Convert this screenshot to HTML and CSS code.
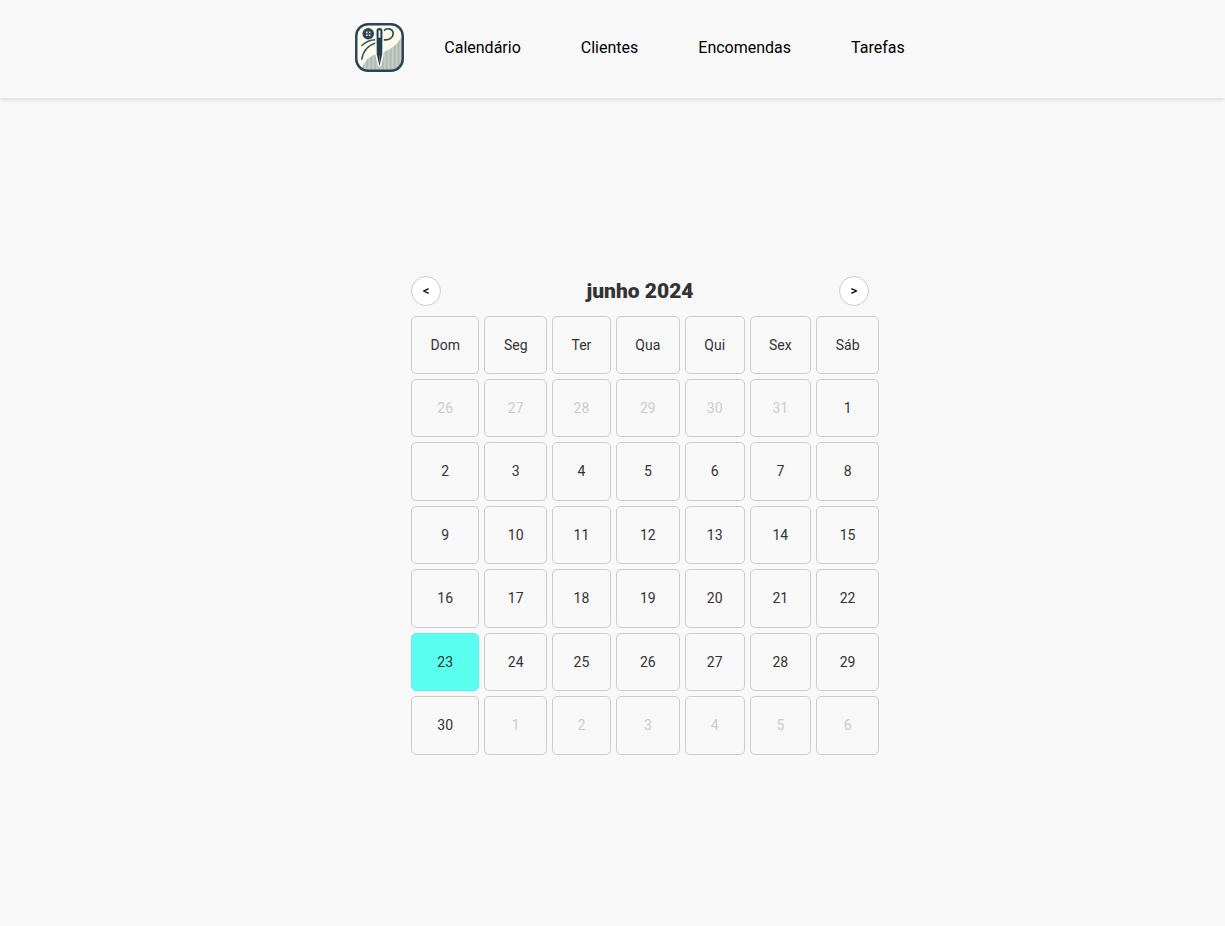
FILE: index.html
```html
<!DOCTYPE html>
<html lang="pt">
<head>
<meta charset="utf-8">
<meta name="viewport" content="width=device-width, initial-scale=1">
<title>Calendário</title>
<link rel="stylesheet" href="styles.css">
</head>
<body>
<header class="topbar">
  <a class="logo" href="#" aria-label="Início">
    <svg viewBox="0 0 50 50" width="49" height="49" aria-hidden="true">
      <defs>
        <clipPath id="frame"><rect x="2" y="2" width="46" height="46" rx="11"/></clipPath>
        <pattern id="weave" width="4" height="50" patternUnits="userSpaceOnUse">
          <rect width="4" height="50" fill="#bbc5bf"/>
          <rect width="1" height="50" fill="#a9b5b1"/>
          <rect x="2" width="1" height="50" fill="#c8cfc8"/>
        </pattern>
      </defs>
      <g clip-path="url(#frame)">
        <rect width="50" height="50" fill="#fbfaec"/>
        <path d="M7 49C8 39 15 33 24 31C36 28 43 23 49 12V50H7Z" fill="url(#weave)"/>
      </g>
      <path d="M7 37C8 28 13 23 22 20M7 23C11 19 16 17 21 17" fill="none" stroke="#35505b" stroke-width="1.5" stroke-linecap="round"/>
      <path d="M29 8C32 5 38 5 39 10C39 15 35 18 29 17" fill="none" stroke="#2f4b57" stroke-width="1.6"/>
      <circle cx="13.5" cy="11" r="5.9" fill="#2b4552"/>
      <g fill="#dbe2dc"><rect x="11.2" y="8.700" width="1.700" height="1.700"/><rect x="14.100" y="8.700" width="1.700" height="1.700"/><rect x="11.200" y="11.600" width="1.700" height="1.700"/><rect x="14.100" y="11.600" width="1.700" height="1.700"/></g>
      <path d="M22 8Q22 5 25 5Q28 5 28 8L27.800 32L25 44L22.200 32Z" fill="#243e4b" stroke="#fbfaec" stroke-width="3"/>
      <path d="M22 8Q22 5 25 5Q28 5 28 8L27.800 32L25 44L22.200 32Z" fill="#243e4b"/>
      <path d="M25 7.500V15" stroke="#e9eee7" stroke-width="2"/>
      <path d="M25 33V40" stroke="#788a8c" stroke-width=".6"/>
      <rect x="1.300" y="1.300" width="47.400" height="47.400" rx="12" fill="none" stroke="#2b4451" stroke-width="2.500"/>
    </svg>
  </a>
  <nav class="menu" aria-label="Principal">
    <a href="#">Calendário</a>
    <a href="#">Clientes</a>
    <a href="#">Encomendas</a>
    <a href="#">Tarefas</a>
  </nav>
</header>
<main class="page">
  <section class="calendar" aria-labelledby="month">
    <div class="calendar-head">
      <button type="button" aria-label="Mês anterior">&lt;</button>
      <h2 id="month">junho 2024</h2>
      <button type="button" aria-label="Mês seguinte">&gt;</button>
    </div>
    <table class="days">
      <thead>
        <tr><th>Dom</th><th>Seg</th><th>Ter</th><th>Qua</th><th>Qui</th><th>Sex</th><th>Sáb</th></tr>
      </thead>
      <tbody>
        <tr><td class="out">26</td><td class="out">27</td><td class="out">28</td><td class="out">29</td><td class="out">30</td><td class="out">31</td><td>1</td></tr>
        <tr><td>2</td><td>3</td><td>4</td><td>5</td><td>6</td><td>7</td><td>8</td></tr>
        <tr><td>9</td><td>10</td><td>11</td><td>12</td><td>13</td><td>14</td><td>15</td></tr>
        <tr><td>16</td><td>17</td><td>18</td><td>19</td><td>20</td><td>21</td><td>22</td></tr>
        <tr><td class="today">23</td><td>24</td><td>25</td><td>26</td><td>27</td><td>28</td><td>29</td></tr>
        <tr><td>30</td><td class="out">1</td><td class="out">2</td><td class="out">3</td><td class="out">4</td><td class="out">5</td><td class="out">6</td></tr>
      </tbody>
    </table>
  </section>
</main>
</body>
</html>
```
FILE: styles.css
```css
* {
  box-sizing: border-box;
}

body {
  display: flex;
  flex-direction: column;
  min-height: 100vh;
  margin: 0;
  background: #f8f8f8;
  color: #333;
  font-family: Roboto, sans-serif;
}

.topbar {
  display: flex;
  align-items: center;
  justify-content: center;
  gap: 40px;
  padding: 23px 0 26px 35px;
  box-shadow: 0 2px 4px rgba(0, 0, 0, 0.1);
}

.logo svg {
  display: block;
}

.menu {
  display: flex;
  gap: 60px;
}

.menu a {
  color: #000;
  font-size: 16px;
  text-decoration: none;
}

.page {
  display: flex;
  flex: 1;
  align-items: center;
  justify-content: center;
  padding: 6px 0 0 65px;
}

.calendar {
  width: 468px;
  max-width: 100%;
}

.calendar-head {
  display: flex;
  align-items: center;
  justify-content: space-between;
  margin: 0 10px 10px 0;
}

.calendar-head h2 {
  margin: 0;
  font-size: 21px;
  font-weight: 900;
  line-height: 26px;
}

.calendar-head button {
  width: 30px;
  height: 30px;
  padding: 0;
  border: 1px solid #ccc;
  border-radius: 50%;
  background: #fff;
  color: #000;
  font-family: inherit;
  font-size: 13px;
  font-weight: 500;
}

.days {
  display: grid;
  grid-template-columns: repeat(7, auto);
  gap: 5px;
  min-height: 439px;
  font-size: 14px;
}

.days thead,
.days tbody,
.days tr {
  display: contents;
}

.days th,
.days td {
  padding: 20px 18px;
  border: 1px solid #ccc;
  border-radius: 5px;
  font-weight: 400;
  text-align: center;
}

.days .out {
  color: #ccc;
}

.days .today {
  border-color: #4df3f6;
  background: #5bfff0;
}
```
